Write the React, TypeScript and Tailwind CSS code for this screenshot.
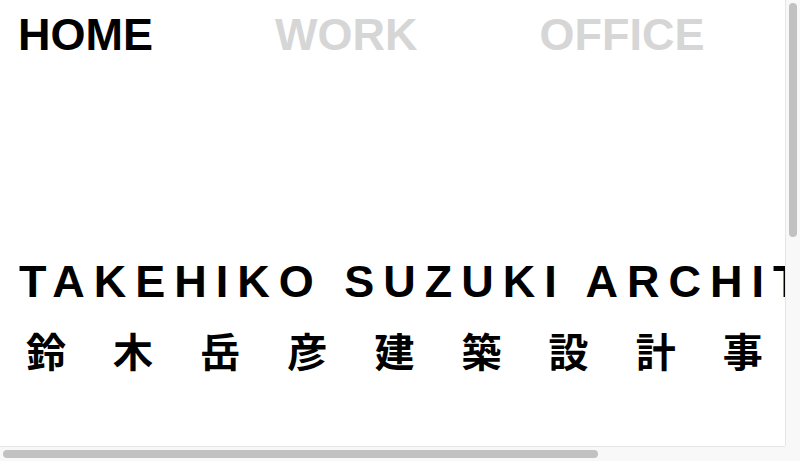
import React from "react";

function Page() {
  return (
    <div className="w-[1038px] min-h-[850px] shrink-0 bg-white text-black" style={{ fontFamily: '"Liberation Sans", Arial, sans-serif' }}>
      <nav className="flex gap-[122px] pl-[18px] pt-[9px] text-[45px] font-bold leading-[1.15]">
        <span className="text-black">HOME</span>
        <span className="text-[#d6d6d6]">WORK</span>
        <span className="text-[#d6d6d6]">OFFICE</span>
      </nav>
      <div className="pt-[195px] pl-[19px]">
        <h1 className="whitespace-nowrap text-[45px] font-bold leading-[1.15] tracking-[9px]">
          TAKEHIKO SUZUKI ARCHITECTS
        </h1>
        <p
          className="mt-[21px] whitespace-nowrap pl-[7px] text-[40px] font-bold leading-[1.2] tracking-[47.1px]"
          style={{ fontFamily: '"Liberation Sans", "Noto Sans CJK JP", sans-serif' }}
        >
          鈴木岳彦建築設計事務所
        </p>
      </div>
    </div>
  );
}

export default function App() {
  return (
    <div className="flex h-[461px] w-[800px] flex-col overflow-hidden bg-white">
      <div className="flex h-[446px]">
        <div className="w-[785px] overflow-hidden">
          <Page />
        </div>
        <div className="w-[15px] border-l border-[#e6e6e6] bg-[#f8f8f8] pt-[3px]">
          <div className="mx-auto h-[234px] w-[8px] rounded-full bg-[#c1c1c1]" />
        </div>
      </div>
      <div className="flex h-[15px]">
        <div className="w-[785px] border-t border-[#e6e6e6] bg-[#f8f8f8] pl-[3px] pt-[3px]">
          <div className="h-[8px] w-[595px] rounded-full bg-[#c1c1c1]" />
        </div>
        <div className="w-[15px] bg-[#f8f8f8]" />
      </div>
    </div>
  );
}
